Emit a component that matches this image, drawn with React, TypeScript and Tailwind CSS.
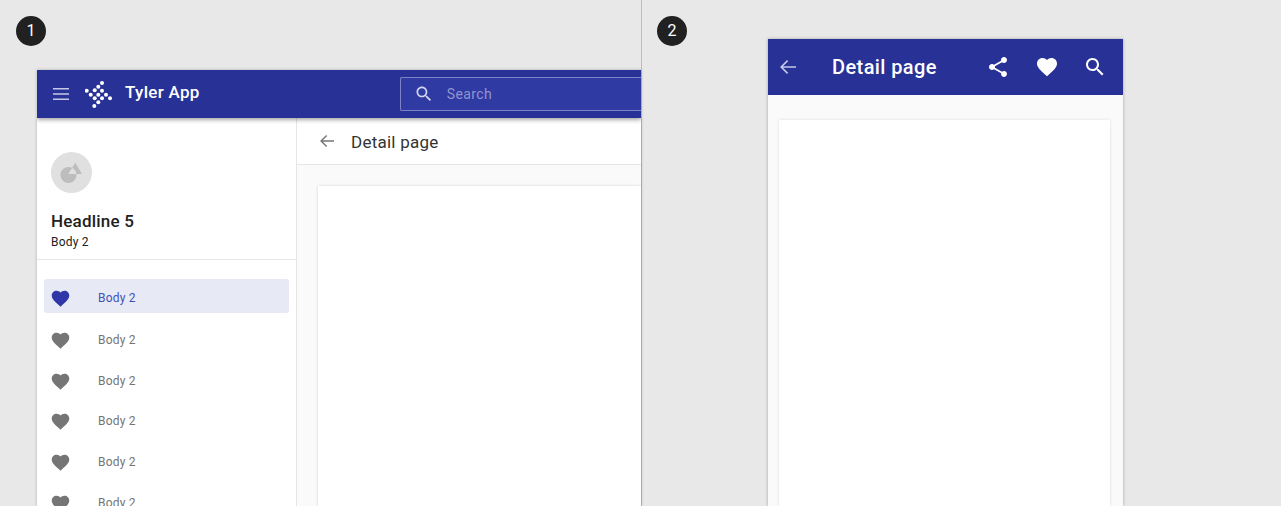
const HEART = "M12 21.35l-1.45-1.32C5.4 15.36 2 12.28 2 8.5 2 5.42 4.42 3 7.5 3c1.74 0 3.41.81 4.5 2.09C13.09 3.81 14.76 3 16.5 3 19.58 3 22 5.42 22 8.5c0 3.78-3.4 6.86-8.55 11.54L12 21.35z";
const SHARE = "M18 16.08c-.76 0-1.44.3-1.96.77L8.91 12.7c.05-.23.09-.46.09-.7s-.04-.47-.09-.7l7.05-4.11c.54.5 1.25.81 2.04.81 1.66 0 3-1.34 3-3s-1.34-3-3-3-3 1.34-3 3c0 .24.04.47.09.7L8.04 9.81C7.5 9.31 6.79 9 6 9c-1.66 0-3 1.34-3 3s1.34 3 3 3c.79 0 1.5-.31 2.04-.81l7.12 4.16c-.05.21-.08.43-.08.65 0 1.61 1.31 2.92 2.92 2.92 1.61 0 2.92-1.31 2.92-2.92s-1.31-2.92-2.92-2.92z";
const SEARCH = "M15.5 14h-.79l-.28-.27C15.41 12.59 16 11.11 16 9.5 16 5.91 13.09 3 9.5 3S3 5.91 3 9.5 5.91 16 9.5 16c1.61 0 3.09-.59 4.23-1.57l.27.28v.79l5 4.99L20.49 19l-4.99-5zm-6 0C7.01 14 5 11.99 5 9.5S7.01 5 9.5 5 14 7.01 14 9.5 11.99 14 9.5 14z";

function Icon({ d, className }: { d: string; className: string }) {
  return (
    <svg viewBox="0 0 24 24" fill="currentColor" className={className}>
      <path d={d} />
    </svg>
  );
}

function Arrow({ className }: { className: string }) {
  return (
    <svg viewBox="0 0 16 14" fill="none" stroke="currentColor" strokeWidth="1.6" className={className}>
      <path d="M16 7H1.2M7.6 0.6 1.2 7l6.4 6.4" />
    </svg>
  );
}

function Badge({ n }: { n: number }) {
  return (
    <div className="flex h-[30px] w-[30px] shrink-0 items-center justify-center rounded-full bg-[#212121] text-[16px] text-white">
      {n}
    </div>
  );
}

const dots = [
  [102, 82], [98.3, 85.7], [94.7, 89.3], [102, 89.7], [86.7, 89.7], [90.7, 93.7], [98.3, 93.7], [106, 93.7],
  [94.7, 97.3], [102, 97.3], [110, 97.3], [98.3, 101.3], [94.3, 105],
];

function Logo() {
  return (
    <svg viewBox="85 80 27 27" className="h-[27px] w-[27px]" fill="#fff">
      {dots.map(([x, y]) => (
        <circle key={`${x}-${y}`} cx={x} cy={y} r={2} />
      ))}
    </svg>
  );
}

function Row({ active }: { active?: boolean }) {
  return (
    <div
      className={
        active
          ? "mb-[7px] flex h-[34px] items-center rounded-[3px] bg-[#e7e9f5] pl-[6px] pt-[5px] text-[#3f51b5]"
          : "flex h-[40.75px] shrink-0 items-center pl-[6px] text-[#757575]"
      }
    >
      <Icon d={HEART} className={active ? "h-[21px] w-[21px] text-[#2f37a8]" : "h-[21px] w-[21px] text-[#757575]"} />
      <span className="mb-[1px] ml-[27px] text-[12px] leading-4 tracking-[0.2px]">Body 2</span>
    </div>
  );
}

export default function App() {
  return (
    <div className="flex h-[506px] w-[1281px] overflow-hidden bg-[#e8e8e8] font-['Roboto',sans-serif]">
      {/* Variant 1 */}
      <div className="flex h-full w-[642px] shrink-0 flex-col border-r border-[#bdbdbd] pl-4 pt-4">
        <Badge n={1} />
        <div className="ml-[21px] mt-6 flex min-h-0 flex-1 flex-col overflow-hidden bg-white shadow-[0_0_3px_rgba(0,0,0,0.25)]">
          <header className="relative z-10 flex h-[48px] shrink-0 items-center bg-[#283196] shadow-[0_2px_4px_rgba(0,0,0,0.35)]">
            <svg viewBox="0 0 16 12" className="ml-[16px] h-[12px] w-[16px] text-[#c5c8e6]" fill="currentColor">
              <path d="M0 0h16v1.6H0zM0 5.2h16v1.6H0zM0 10.4h16v1.6H0z" />
            </svg>
            <div className="ml-[16px]">
              <Logo />
            </div>
            <span className="mb-[2px] ml-[13px] text-[17px] font-medium tracking-[0.3px] text-white">Tyler App</span>
            <div className="ml-[200px] flex h-[34px] flex-1 items-center rounded-l-[2px] border border-r-0 border-[#7c82c4] bg-[#303aa3]">
              <Icon d={SEARCH} className="ml-[13px] h-[20px] w-[20px] text-[#d4d6ee]" />
              <span className="ml-[13px] text-[14px] tracking-[0.4px] text-[#9095d0]">Search</span>
            </div>
          </header>
          <div className="flex min-h-0 flex-1">
            <aside className="flex w-[260px] shrink-0 flex-col border-r border-[#e6e6e6] bg-white">
              <div className="h-[142px] shrink-0 border-b border-[#e6e6e6] pl-[14px] pt-[34px]">
                <div className="flex h-[41px] w-[41px] items-center justify-center rounded-full bg-[#e0e0e0]">
                  <svg viewBox="0 0 41 41" className="h-[41px] w-[41px]">
                    <path
                      fillRule="evenodd"
                      fill="#bdbdbd"
                      d="M9.5 23a8 8 0 1 0 16 0a8 8 0 1 0-16 0zM24.3 10.7 31 22H17.3z"
                    />
                  </svg>
                </div>
                <div className="mt-[17px] text-[17px] font-medium leading-[22px] tracking-[0.2px] text-[#212121]">Headline 5</div>
                <div className="mt-[2px] text-[12px] leading-4 tracking-[0.2px] text-[#212121]">Body 2</div>
              </div>
              <div className="flex flex-col pl-[7px] pr-[7px] pt-[19px]">
                <Row active />
                <Row />
                <Row />
                <Row />
                <Row />
                <Row />
              </div>
            </aside>
            <main className="flex min-w-0 flex-1 flex-col bg-[#fafafa]">
              <div className="flex h-[47px] shrink-0 items-center border-b border-[#e6e6e6] bg-white">
                <Arrow className="ml-[23px] h-[14px] w-[14px] text-[#757575]" />
                <span className="ml-[17px] mt-[3px] text-[17px] tracking-[0.25px] text-[#333333]">Detail page</span>
              </div>
              <div className="min-h-0 flex-1 pl-[21px] pt-[21px]">
                <div className="h-full bg-white shadow-[0_0_3px_rgba(0,0,0,0.15)]" />
              </div>
            </main>
          </div>
        </div>
      </div>
      {/* Variant 2 */}
      <div className="flex h-full flex-1 items-start pl-[15px] pt-4">
        <Badge n={2} />
        <div className="-mt-4 ml-[81px] flex h-[506px] w-[355px] flex-col pt-[39px]">
          <div className="flex min-h-0 flex-1 flex-col bg-[#fafafa] shadow-[0_0_3px_rgba(0,0,0,0.3)]">
            <header className="flex h-[56px] shrink-0 items-center bg-[#283196]">
              <Arrow className="ml-[12px] h-[14px] w-[16px] text-[#c5c8e6]" />
              <span className="ml-[36px] w-[105px] text-[20px] font-medium tracking-[0.4px] whitespace-nowrap text-white">Detail page</span>
              <Icon d={SHARE} className="ml-[49px] h-[24px] w-[24px] text-white" />
              <Icon d={HEART} className="ml-[25px] h-[24px] w-[24px] text-white" />
              <Icon d={SEARCH} className="ml-[24px] h-[24px] w-[24px] text-white" />
            </header>
            <div className="min-h-0 flex-1 pl-[11px] pr-[13px] pt-[25px]">
              <div className="h-full bg-white shadow-[0_0_3px_rgba(0,0,0,0.12)]" />
            </div>
          </div>
        </div>
      </div>
    </div>
  );
}
